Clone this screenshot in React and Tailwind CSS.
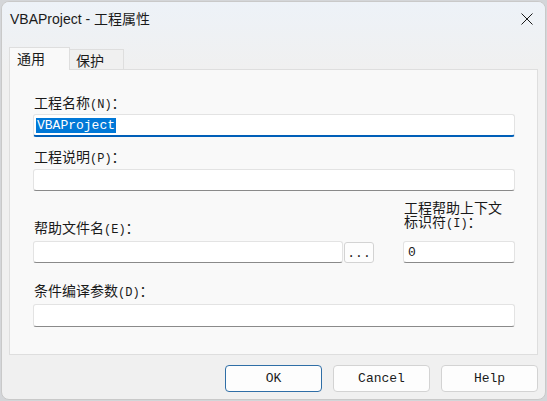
const cjk = "font-['Noto_Sans_Mono_CJK_SC','Noto_Sans_CJK_SC',sans-serif]";
const mono = "font-['Liberation_Mono','Noto_Sans_CJK_SC',monospace]";

// Label like "工程名称(N)：" with half-width ascii part
const Label = ({ text, hotkey, className = "" }) => (
  <div
    className={`${cjk} h-[16px] flex items-baseline whitespace-nowrap text-[14px] leading-[16px] text-[#1a1a1a] ${className}`}
  >
    <span>{text}</span>
    <span className={`${mono} text-[12px]`}>({hotkey})</span>
    <span>：</span>
  </div>
);

const TextBox = ({ value, focused, selected, className = "" }) => (
  <div
    className={`flex items-center bg-white border border-[#e3e3e3] rounded-[3px] ${
      focused ? "border-b-2 border-b-[#005fb8]" : "border-b-[#8a8a8a]"
    } ${className}`}
  >
    {value && (
      <span
        className={`${mono} text-[13px] leading-[15px] ${
          selected ? "ml-[2px] bg-[#0078d7] text-white px-[1px]" : "ml-[4px] text-[#1a1a1a]"
        }`}
      >
        {value}
      </span>
    )}
  </div>
);

const Button = ({ children, primary }) => (
  <button
    className={`w-[97px] h-[27px] rounded-[4px] bg-[#fdfdfd] ${mono} text-[13px] text-[#1a1a1a] border ${
      primary ? "border-[#2f6ea6]" : "border-[#d3d3d3]"
    }`}
  >
    {children}
  </button>
);

export default function App() {
  return (
    <div className="w-[547px] h-[401px] bg-[#d4d6d9] pt-[1px] pl-[1px]">
      <div className="w-[545px] h-[399px] flex flex-col rounded-[8px] border border-[#c9c9c9] bg-[#f0f0f0] overflow-hidden">
        {/* Title bar + tab strip */}
        <div className="bg-linear-to-b from-[#edf2f8] to-[#f0f0f0]">
          <div className="h-[34px] flex items-center justify-between pl-[8px] pr-[12px]">
            <span className="font-['Liberation_Sans','Noto_Sans_CJK_SC',sans-serif] text-[14px] text-[#1a1a1a]">
              VBAProject - 工程属性
            </span>
            <svg width="12" height="12" viewBox="0 0 12 12" className="text-[#1a1a1a]">
              <path d="M0.5 0.5 L11.5 11.5 M11.5 0.5 L0.5 11.5" stroke="currentColor" strokeWidth="1" />
            </svg>
          </div>
          {/* Tabs */}
          <div className="mt-[11px] ml-[7px] flex items-end h-[22px]">
            <div
              className={`relative z-10 -mb-px w-[61px] h-[23px] bg-[#f9f9f9] border border-b-0 border-[#dedede] pl-[7px] ${cjk} text-[14px] leading-[21px] text-[#1a1a1a]`}
            >
              通用
            </div>
            <div
              className={`w-[54px] h-[20px] border border-l-0 border-b-0 border-[#dedede] bg-[#f0f0f0] pl-[6px] ${cjk} text-[14px] leading-[20px] text-[#1a1a1a]`}
            >
              保护
            </div>
          </div>
        </div>

        {/* Panel */}
        <div className="ml-[7px] w-[529px] h-[286px] shrink-0 border border-[#dedede] bg-[#f9f9f9] pl-[23px] pr-[22px] pt-[24px]">
          <Label text="工程名称" hotkey="N" className="pl-[1px]" />
          <TextBox value="VBAProject" focused selected className="mt-[4px] h-[23px]" />

          <Label text="工程说明" hotkey="P" className="mt-[11px] pl-[1px]" />
          <TextBox className="mt-[5px] h-[22px]" />

          <div className="mt-[9px] flex items-end">
            <div className="w-[310px] flex flex-col">
              <Label text="帮助文件名" hotkey="E" className="pl-[1px] mb-[6px]" />
              <TextBox className="h-[22px]" />
            </div>
            <button
              className={`ml-[1px] w-[30px] h-[21px] rounded-[3px] border border-[#d3d3d3] bg-[#fdfdfd] ${mono} text-[13px] leading-[21px] text-[#1a1a1a]`}
            >
              ...
            </button>
            <div className="ml-[29px] w-[112px] flex flex-col">
              <div className={`${cjk} text-[14px] text-[#1a1a1a] pl-[1px] mb-[13px] whitespace-nowrap`}>
                <div className="h-[14px] leading-[14px]">工程帮助上下文</div>
                <div className="h-[14px] flex items-baseline leading-[14px]">
                  <span>标识符</span>
                  <span className={`${mono} text-[12px]`}>(I)</span>
                  <span>：</span>
                </div>
              </div>
              <TextBox value="0" className="h-[22px]" />
            </div>
          </div>

          <Label text="条件编译参数" hotkey="D" className="mt-[19px] pl-[1px]" />
          <TextBox className="mt-[6px] h-[23px]" />
        </div>

        {/* Buttons */}
        <div className="mt-[10px] mr-[7px] flex justify-end gap-[11px]">
          <Button primary>OK</Button>
          <Button>Cancel</Button>
          <Button>Help</Button>
        </div>
      </div>
    </div>
  );
}
